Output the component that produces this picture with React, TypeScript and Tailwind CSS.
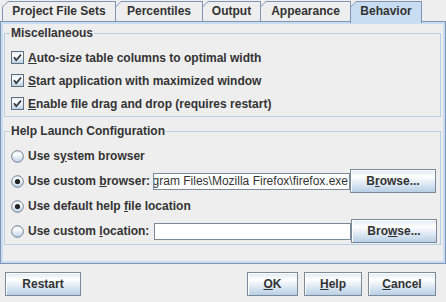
import React from 'react';

// Preferencias — pestaña "Behavior" (aspecto Metal/Ocean de Swing)

const tabs = [
  { label: 'Project File Sets', width: 'w-[114px]', selected: false },
  { label: 'Percentiles', width: 'w-[88px]', selected: false },
  { label: 'Output', width: 'w-[59px]', selected: false },
  { label: 'Appearance', width: 'w-[91px]', selected: false },
  { label: 'Behavior', width: 'w-[72px]', selected: true },
];

const Tab: React.FC<{ label: string; width: string; selected: boolean }> = ({ label, width, selected }) => (
  <div
    className={`${width} -ml-[1px] first:ml-0 bg-[#8094b4] px-[1px] pt-[1px] [clip-path:polygon(0_6px,6px_0,100%_0,100%_100%,0_100%)] ${
      selected ? 'h-[22px] self-start mt-[1px]' : 'h-[20px]'
    }`}
  >
    <div
      className={`h-full flex items-center justify-center pb-[1px] [clip-path:polygon(0_5px,5px_0,100%_0,100%_100%,0_100%)] ${
        selected ? 'bg-[#c8ddf2] pb-[3px]' : 'bg-[#eeeeee]'
      }`}
    >
      {label}
    </div>
  </div>
);

const CheckBox = () => (
  <svg width="13" height="13" viewBox="0 0 13 13" className="shrink-0">
    <defs>
      <linearGradient id="cbFill" x1="0" y1="0" x2="0" y2="1">
        <stop offset="0" stopColor="#dde8f3" />
        <stop offset="0.3" stopColor="#ffffff" />
        <stop offset="1" stopColor="#b8cfe5" />
      </linearGradient>
    </defs>
    <rect x="0.5" y="0.5" width="12" height="12" fill="url(#cbFill)" stroke="#5f6f82" />
    <path d="M3 6.3 L5.2 9.2 L10 3.6" fill="none" stroke="#333333" strokeWidth="1.7" />
  </svg>
);

const Radio: React.FC<{ checked?: boolean }> = ({ checked }) => (
  <svg width="13" height="13" viewBox="0 0 13 13" className="shrink-0">
    <defs>
      <linearGradient id="rbFill" x1="0" y1="0" x2="0" y2="1">
        <stop offset="0" stopColor="#dde8f3" />
        <stop offset="0.3" stopColor="#ffffff" />
        <stop offset="1" stopColor="#b8cfe5" />
      </linearGradient>
    </defs>
    <circle cx="6.5" cy="6.5" r="5.8" fill="url(#rbFill)" stroke="#6e7d8f" strokeWidth="1" />
    {checked && <circle cx="6.5" cy="6.5" r="2.6" fill="#222222" />}
  </svg>
);

const Button: React.FC<{ width: string; className?: string; children: React.ReactNode }> = ({ width, className = '', children }) => (
  <div
    className={`${width} ${className} h-[24px] shrink-0 flex items-center justify-center border border-[#7a8a99] shadow-[inset_1px_1px_0_#ffffff] bg-[linear-gradient(to_bottom,#dde8f3_0%,#ffffff_30%,#b8cfe5_100%)]`}
  >
    {children}
  </div>
);

// el campo está desplazado: sólo se ve el final de la ruta
const TextField: React.FC<{ value?: string }> = ({ value }) => (
  <div className="w-[197px] h-[17px] shrink-0 border border-[#7a8a99] bg-white flex items-center justify-end overflow-hidden pr-[1px] font-normal whitespace-nowrap">
    {value}
  </div>
);

const CheckRow: React.FC<{ children: React.ReactNode }> = ({ children }) => (
  <div className="h-[23px] flex items-center pl-[6px] gap-[4px]">
    <CheckBox />
    <span>{children}</span>
  </div>
);

export default function App() {
  return (
    <div className="w-[446px] h-[302px] bg-[#eeeeee] text-[12px] leading-[14px] font-bold text-[#333333] font-['Liberation_Sans',Arial,sans-serif] overflow-hidden">
      {/* Pestañas */}
      <div className="relative z-10 h-[21px] flex items-end pl-[2px]">
        {tabs.map((t) => (
          <Tab key={t.label} {...t} />
        ))}
      </div>

      {/* Contenido de la pestaña */}
      <div className="h-[243px] border border-[#8094b4]">
        <div className="h-full border-2 border-[#c8ddf2] pt-[2px] pl-[1px] pr-[2px]">
          <fieldset className="border border-[#b8cfe5] pt-[6px] pb-[1px]">
            <legend className="ml-[5px] px-[1px]">Miscellaneous</legend>
            <CheckRow>
              <u>A</u>uto-size table columns to optimal width
            </CheckRow>
            <CheckRow>
              <u>S</u>tart application with maximized window
            </CheckRow>
            <CheckRow>
              <u>E</u>nable file drag and drop (requires restart)
            </CheckRow>
          </fieldset>

          <fieldset className="mt-[7px] border border-[#b8cfe5] pt-[6px] pb-[1px] flex flex-col gap-[1px]">
            <legend className="ml-[5px] px-[1px]">Help Launch Configuration</legend>
            <div className="h-[24px] flex items-center pl-[6px]">
              <Radio />
              <span className="ml-[4px]">
                Use s<u>y</u>stem browser
              </span>
            </div>
            <div className="h-[24px] flex items-center pl-[6px]">
              <Radio checked />
              <span className="ml-[4px] w-[125px] shrink-0">
                Use custom <u>b</u>rowser:
              </span>
              <TextField value="gram Files\Mozilla Firefox\firefox.exe" />
              <Button width="w-[86px]">
                <span>
                  B<u>r</u>owse...
                </span>
              </Button>
            </div>
            <div className="h-[24px] flex items-center pl-[6px]">
              <Radio checked />
              <span className="ml-[4px]">
                Use default help <u>f</u>ile location
              </span>
            </div>
            <div className="h-[24px] flex items-center pl-[6px]">
              <Radio />
              <span className="ml-[4px] w-[126px] shrink-0">
                Use custom <u>l</u>ocation:
              </span>
              <TextField />
              <Button width="w-[86px]">
                <span>
                  Bro<u>w</u>se...
                </span>
              </Button>
            </div>
          </fieldset>
        </div>
      </div>

      {/* Botones inferiores */}
      <div className="mt-[8px] flex pl-[5px] pr-[10px]">
        <Button width="w-[76px]">Restart</Button>
        <div className="flex-1" />
        <Button width="w-[51px]">
          <span>
            <u>O</u>K
          </span>
        </Button>
        <Button width="w-[58px]" className="ml-[6px]">
          <span>
            <u>H</u>elp
          </span>
        </Button>
        <Button width="w-[68px]" className="ml-[6px]">
          <span>
            <u>C</u>ancel
          </span>
        </Button>
      </div>
    </div>
  );
}
